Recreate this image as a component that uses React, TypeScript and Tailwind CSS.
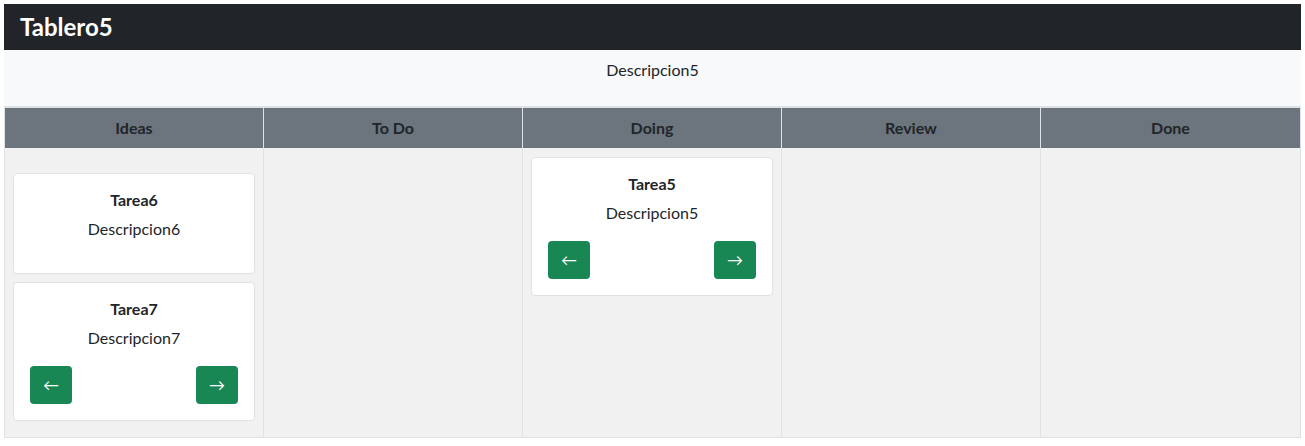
const columns = ["Ideas", "To Do", "Doing", "Review", "Done"];

type Task = { id: number; title: string; description: string; buttons: boolean };

const tasks: Record<string, Task[]> = {
  Ideas: [
    { id: 6, title: "Tarea6", description: "Descripcion6", buttons: false },
    { id: 7, title: "Tarea7", description: "Descripcion7", buttons: true },
  ],
  "To Do": [],
  Doing: [{ id: 5, title: "Tarea5", description: "Descripcion5", buttons: true }],
  Review: [],
  Done: [],
};

function TaskCard({ task }: { task: Task }) {
  return (
    <div className="mb-2 rounded border border-[#dee2e6] bg-white p-4 text-center">
      <h6 className="mb-2 text-[16px] font-bold leading-[1.2] text-[#212529]">{task.title}</h6>
      <p className="mb-4 text-[16px] leading-6 text-[#212529]">{task.description}</p>
      {task.buttons && (
        <div className="flex items-center justify-between">
          <button className="flex h-[38px] w-[42px] items-center justify-center rounded bg-[#198754] text-[16px] text-white">
            ←
          </button>
          <button className="flex h-[38px] w-[42px] items-center justify-center rounded bg-[#198754] text-[16px] text-white">
            →
          </button>
        </div>
      )}
    </div>
  );
}

export default function App() {
  return (
    <div className="p-1 font-['Segoe_UI','Lato','Liberation_Sans',sans-serif] text-[#212529]">
      <div className="flex h-[46px] items-center bg-[#212529] px-4">
        <h4 className="text-[24px] font-bold leading-none text-white">Tablero5</h4>
      </div>

      <div className="bg-[#f8f9fa] pb-6 pt-2 text-center">
        <p className="text-[16px] leading-6">Descripcion5</p>
      </div>

      <div className="grid grid-cols-5 border border-t-2 border-[#dee2e6]">
        {columns.map((col, i) => (
          <div
            key={col}
            className={`flex h-[40px] items-center justify-center bg-[#6c757d] text-[16px] font-bold ${
              i < columns.length - 1 ? "border-r border-[#dee2e6]" : ""
            }`}
          >
            {col}
          </div>
        ))}
        {columns.map((col, i) => (
          <div
            key={col + "-body"}
            className={`h-[289px] bg-[#f1f1f1] pl-2 pr-2 ${
              i < columns.length - 1 ? "border-r border-[#dee2e6]" : ""
            } ${col === "Ideas" ? "pt-[25px]" : "pt-[9px]"}`}
          >
            {tasks[col].map((t) => (
              <TaskCard key={t.id} task={t} />
            ))}
          </div>
        ))}
      </div>
    </div>
  );
}
